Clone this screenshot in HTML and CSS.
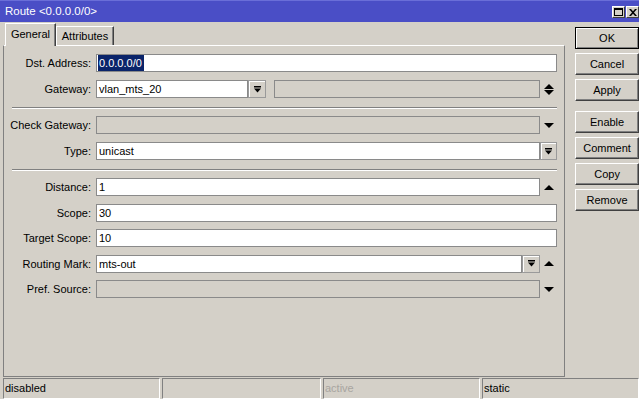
FILE: index.html
```html
<!DOCTYPE html>
<html lang="en">
<head>
    <meta charset="UTF-8">
    <title>Route &lt;0.0.0.0/0&gt;</title>
    <link rel="stylesheet" href="styles.css">
</head>
<body>
<div class="window">
    <div class="titlebar">
        <span class="title">Route &lt;0.0.0.0/0&gt;</span>
        <div class="caption-btns">
            <span class="cap-btn">
                <svg width="9" height="8" viewBox="0 0 9 8"><rect x="0.5" y="0.5" width="8" height="7" fill="none" stroke="#000"/><rect x="0" y="0" width="9" height="2" fill="#000"/></svg>
            </span>
            <span class="cap-btn">
                <svg width="8" height="7" viewBox="0 0 8 7"><path d="M0 0h2l2 2.2L6 0h2L5 3.5 8 7H6L4 4.8 2 7H0l3-3.5z" fill="#000"/></svg>
            </span>
        </div>
    </div>

    <div class="main">
        <div class="tabs">
            <div class="tabstrip">
                <div class="tab active">General</div>
                <div class="tab tab-attr">Attributes</div>
            </div>
            <div class="panel">
                <div class="section">
                    <div class="row">
                        <label>Dst. Address:</label>
                        <div class="field">
                            <div class="input"><span class="sel">0.0.0.0/0</span></div>
                        </div>
                    </div>
                    <div class="row">
                        <label>Gateway:</label>
                        <div class="field">
                            <div class="input gw">vlan_mts_20</div>
                            <span class="dd">
                                <svg width="7" height="7" viewBox="0 0 7 7"><rect x="0" y="0" width="7" height="1.5"/><path d="M0 2.5h7L3.5 6.5z"/></svg>
                            </span>
                            <div class="input disabled gw-extra"></div>
                            <span class="slot">
                                <svg width="10" height="11" viewBox="0 0 10 11"><path d="M0 5L5 0l5 5z"/><path d="M0 6h10l-5 5z"/></svg>
                            </span>
                        </div>
                    </div>
                </div>

                <div class="sep"></div>

                <div class="section">
                    <div class="row">
                        <label>Check Gateway:</label>
                        <div class="field">
                            <div class="input disabled"></div>
                            <span class="slot">
                                <svg width="10" height="5" viewBox="0 0 10 5"><path d="M0 0h10L5 5z"/></svg>
                            </span>
                        </div>
                    </div>
                    <div class="row">
                        <label>Type:</label>
                        <div class="field">
                            <div class="input">unicast</div>
                            <span class="dd dd-end">
                                <svg width="7" height="7" viewBox="0 0 7 7"><rect x="0" y="0" width="7" height="1.5"/><path d="M0 2.5h7L3.5 6.5z"/></svg>
                            </span>
                        </div>
                    </div>
                </div>

                <div class="sep"></div>

                <div class="section tight">
                    <div class="row">
                        <label>Distance:</label>
                        <div class="field">
                            <div class="input">1</div>
                            <span class="slot">
                                <svg width="10" height="5" viewBox="0 0 10 5"><path d="M0 5L5 0l5 5z"/></svg>
                            </span>
                        </div>
                    </div>
                    <div class="row">
                        <label>Scope:</label>
                        <div class="field">
                            <div class="input">30</div>
                        </div>
                    </div>
                    <div class="row">
                        <label>Target Scope:</label>
                        <div class="field">
                            <div class="input">10</div>
                        </div>
                    </div>
                    <div class="row">
                        <label>Routing Mark:</label>
                        <div class="field">
                            <div class="input">mts-out</div>
                            <span class="dd">
                                <svg width="7" height="7" viewBox="0 0 7 7"><rect x="0" y="0" width="7" height="1.5"/><path d="M0 2.5h7L3.5 6.5z"/></svg>
                            </span>
                            <span class="slot">
                                <svg width="10" height="5" viewBox="0 0 10 5"><path d="M0 5L5 0l5 5z"/></svg>
                            </span>
                        </div>
                    </div>
                    <div class="row">
                        <label>Pref. Source:</label>
                        <div class="field">
                            <div class="input disabled"></div>
                            <span class="slot">
                                <svg width="10" height="5" viewBox="0 0 10 5"><path d="M0 0h10L5 5z"/></svg>
                            </span>
                        </div>
                    </div>
                </div>
            </div>
        </div>

        <div class="buttons">
            <button class="btn default">OK</button>
            <button class="btn">Cancel</button>
            <button class="btn">Apply</button>
            <button class="btn group">Enable</button>
            <button class="btn">Comment</button>
            <button class="btn">Copy</button>
            <button class="btn">Remove</button>
        </div>
    </div>

    <div class="statusbar">
        <div class="cell c1">disabled</div>
        <div class="cell c2"></div>
        <div class="cell c3 muted">active</div>
        <div class="cell c4">static</div>
    </div>
</div>
</body>
</html>
```

FILE: styles.css
```css
* {
    box-sizing: border-box;
}

body {
    margin: 0;
    background: #d4d0c8;
    font-family: "Liberation Sans", Arial, sans-serif;
    font-size: 11px;
    color: #000;
}

.window {
    width: 639px;
    height: 399px;
    overflow: hidden;
    display: flex;
    flex-direction: column;
}

/* title bar */
.titlebar {
    height: 22px;
    flex: none;
    background: #4a4ec6;
    border-top: 1px solid #6a6ed8;
    color: #fff;
    display: flex;
    justify-content: space-between;
    padding-left: 5px;
}

.title {
    font-size: 11.5px;
    line-height: 20px;
}

.caption-btns {
    display: flex;
    gap: 1px;
    margin-top: 5px;
}

.cap-btn {
    width: 13px;
    height: 12px;
    background: #d4d0c8;
    border: 1px solid;
    border-color: #fff #404040 #404040 #fff;
    display: flex;
    align-items: center;
    justify-content: center;
}

/* main area */
.main {
    height: 356px;
    flex: none;
    display: flex;
    padding-left: 3px;
}

.tabs {
    width: 563px;
    display: flex;
    flex-direction: column;
    padding-bottom: 1px;
}

.tabstrip {
    height: 23px;
    padding: 1px 0 0 2px;
    display: flex;
    align-items: flex-end;
    position: relative;
    z-index: 1;
}

.tab {
    height: 19px;
    width: 58px;
    text-align: center;
    line-height: 18px;
    background: #d4d0c8;
    border: 1px solid;
    border-color: #fff #404040 transparent #fff;
    border-bottom: none;
    box-shadow: inset -1px 0 #808080;
}

.tab.active {
    width: 51px;
    height: 23px;
    line-height: 20px;
    margin-bottom: -1px;
}

.panel {
    flex: 1;
    border: 1px solid #808080;
    border-top-color: #fff;
    padding: 8px 7px 0 3px;
}

.section {
    display: flex;
    flex-direction: column;
    gap: 8px;
}

.section.tight {
    gap: 7.5px;
}

.row {
    display: grid;
    grid-template-columns: 84px 1fr;
    column-gap: 5px;
    height: 18px;
}

.row label {
    text-align: right;
    white-space: nowrap;
    line-height: 18px;
}

.field {
    display: flex;
    height: 18px;
}

.input {
    flex: 1;
    height: 18px;
    background: #fff;
    border: 1px solid #8a8a8a;
    padding-left: 2px;
    line-height: 16px;
    white-space: nowrap;
    overflow: hidden;
}

.input.disabled {
    background: #d4d0c8;
}

.input.gw {
    flex: none;
    width: 152px;
}

.input.gw-extra {
    margin-left: 8px;
}

.sel {
    display: inline-block;
    margin-left: -1px;
    padding: 0 2px 0 1px;
    height: 16px;
    background: #0a246a;
    color: #fff;
}

.dd {
    width: 18px;
    height: 18px;
    flex: none;
    background: #d4d0c8;
    border: 1px solid #9a9a9a;
    box-shadow: inset 1px 1px #fff;
    display: flex;
    align-items: center;
    justify-content: center;
}

.dd-end {
    width: 17px;
}

.slot {
    width: 17px;
    flex: none;
    display: flex;
    align-items: center;
    justify-content: center;
}

.sep {
    height: 2px;
    margin: 9px 0 7px 5px;
    border-top: 1px solid #808080;
    border-bottom: 1px solid #fff;
}

/* right button column */
.buttons {
    width: 64px;
    margin-left: 10px;
    padding-top: 5px;
    display: flex;
    flex-direction: column;
    gap: 4px;
}

.btn {
    height: 22px;
    padding: 0;
    font-family: inherit;
    font-size: 11px;
    color: #000;
    background: #d4d0c8;
    border: 1px solid;
    border-color: #fff #404040 #404040 #fff;
    box-shadow: inset -1px -1px #808080;
}

.btn.default {
    border-color: #000;
    box-shadow: inset 1px 1px #fff, inset -1px -1px #808080;
}

.btn.group {
    margin-top: 6px;
}

/* status bar */
.statusbar {
    height: 21px;
    flex: none;
    display: flex;
    gap: 2px;
    padding-left: 3px;
}

.cell {
    border: 1px solid;
    border-color: #808080 #fff #fff #808080;
    padding-left: 1px;
    line-height: 19px;
    white-space: nowrap;
}

.c1 { width: 157px; }
.c2 { width: 159px; }
.c3 { width: 157px; }
.c4 { flex: 1; }

.muted {
    color: #a8a5a0;
}
```
